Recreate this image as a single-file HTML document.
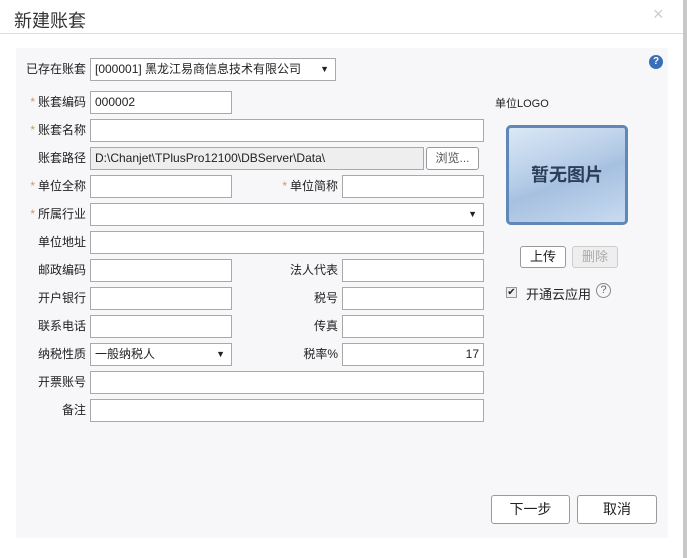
<!DOCTYPE html><html><head><meta charset="utf-8"><style>
*{margin:0;padding:0;box-sizing:border-box}
body{width:687px;height:558px;background:#fff;font-family:"Liberation Sans","Noto Sans CJK SC",sans-serif;font-size:12px;color:#222;position:relative;overflow:hidden}
.a{position:absolute}
.in{position:absolute;height:23px;border:1px solid #a9a9a9;background:#fff;padding-left:4px;line-height:21px;font-size:12px}
.lb{position:absolute;width:84px;text-align:right;line-height:23px;font-size:12px}
.st{color:#c8a060;margin-right:3px}
.btn{position:absolute;border:1px solid #9a9a9a;border-radius:3px;background:#fff;text-align:center;font-size:14px}
</style></head><body>
<div class="a" style="left:0;top:0;width:683px;height:34px;border-bottom:1px solid #ddd"></div>
<div class="a" style="left:14px;top:7px;font-size:18px;color:#333">新建账套</div>
<div class="a" style="left:653px;top:4px;font-size:18px;color:#ccc">×</div>
<div class="a" style="left:683px;top:0;width:4px;height:558px;background:#c8c8c8"></div>
<div class="a" style="left:16px;top:48px;width:652px;height:490px;background:#f7f7f9"></div>
<div class="a" style="left:649px;top:55px;width:14px;height:14px;border-radius:50%;background:#3a6fb8;color:#fff;font-size:10px;text-align:center;line-height:14px;font-weight:bold">?</div>

<div class="lb" style="left:2px;top:58px;width:84px">已存在账套</div>
<div class="in" style="left:90px;top:58px;width:246px;white-space:nowrap">[000001] 黑龙江易商信息技术有限公司<span style="position:absolute;right:6px;font-size:9px">▼</span></div>

<div class="lb" style="left:2px;top:91px"><span class="st">*</span>账套编码</div>
<div class="in" style="left:90px;top:91px;width:142px">000002</div>
<div class="lb" style="left:2px;top:119px"><span class="st">*</span>账套名称</div>
<div class="in" style="left:90px;top:119px;width:394px"></div>
<div class="lb" style="left:2px;top:147px">账套路径</div>
<div class="in" style="left:90px;top:147px;width:334px;background:#eee">D:\Chanjet\TPlusPro12100\DBServer\Data\</div>
<div class="btn" style="left:426px;top:147px;width:53px;height:23px;line-height:21px;font-size:12px;color:#555">浏览...</div>
<div class="lb" style="left:2px;top:175px"><span class="st">*</span>单位全称</div>
<div class="in" style="left:90px;top:175px;width:142px"></div>
<div class="lb" style="left:254px;top:175px"><span class="st">*</span>单位简称</div>
<div class="in" style="left:342px;top:175px;width:142px"></div>
<div class="lb" style="left:2px;top:203px"><span class="st">*</span>所属行业</div>
<div class="in" style="left:90px;top:203px;width:394px"><span style="position:absolute;right:6px;font-size:9px">▼</span></div>
<div class="lb" style="left:2px;top:231px">单位地址</div>
<div class="in" style="left:90px;top:231px;width:394px"></div>
<div class="lb" style="left:2px;top:259px">邮政编码</div>
<div class="in" style="left:90px;top:259px;width:142px"></div>
<div class="lb" style="left:254px;top:259px">法人代表</div>
<div class="in" style="left:342px;top:259px;width:142px"></div>
<div class="lb" style="left:2px;top:287px">开户银行</div>
<div class="in" style="left:90px;top:287px;width:142px"></div>
<div class="lb" style="left:254px;top:287px">税号</div>
<div class="in" style="left:342px;top:287px;width:142px"></div>
<div class="lb" style="left:2px;top:315px">联系电话</div>
<div class="in" style="left:90px;top:315px;width:142px"></div>
<div class="lb" style="left:254px;top:315px">传真</div>
<div class="in" style="left:342px;top:315px;width:142px"></div>
<div class="lb" style="left:2px;top:343px">纳税性质</div>
<div class="in" style="left:90px;top:343px;width:142px">一般纳税人<span style="position:absolute;right:6px;font-size:9px">▼</span></div>
<div class="lb" style="left:254px;top:343px">税率%</div>
<div class="in" style="left:342px;top:343px;width:142px;text-align:right;padding-right:4px">17</div>
<div class="lb" style="left:2px;top:371px">开票账号</div>
<div class="in" style="left:90px;top:371px;width:394px"></div>
<div class="lb" style="left:2px;top:399px">备注</div>
<div class="in" style="left:90px;top:399px;width:394px"></div>

<div class="a" style="left:495px;top:95px;font-size:11px">单位LOGO</div>
<div class="a" style="left:506px;top:125px;width:122px;height:100px;border:3px solid #5f88b8;border-radius:5px;background:linear-gradient(160deg,#dbe8f6 0%,#b4cbe6 45%,#a6c0e0 55%,#c8dbf0 100%);text-align:center;line-height:94px;font-size:18px;font-weight:bold;color:#2c3e5a">暂无图片</div>
<div class="btn" style="left:520px;top:246px;width:46px;height:22px;line-height:20px;font-size:13px">上传</div>
<div class="btn" style="left:572px;top:246px;width:46px;height:22px;line-height:20px;font-size:13px;background:#eee;border-color:#ccc;color:#aaa">删除</div>
<div class="a" style="left:506px;top:287px;width:11px;height:11px;border:1px solid #999;background:#eee;font-size:10px;line-height:9px;text-align:center">✔</div>
<div class="a" style="left:526px;top:284px;font-size:13px">开通云应用</div>
<div class="a" style="left:596px;top:283px;width:15px;height:15px;border:1px solid #888;border-radius:50%;font-size:11px;text-align:center;line-height:13px;color:#666">?</div>

<div class="btn" style="left:491px;top:495px;width:79px;height:29px;line-height:27px">下一步</div>
<div class="btn" style="left:577px;top:495px;width:80px;height:29px;line-height:27px">取消</div>
</body></html>
